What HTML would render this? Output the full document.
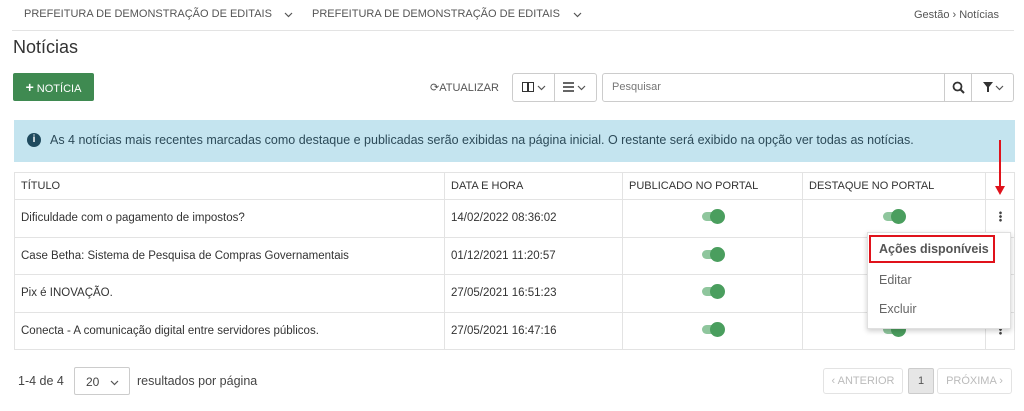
<!DOCTYPE html>
<html><head><meta charset="utf-8"><style>
*{box-sizing:border-box;margin:0;padding:0}
body{width:1024px;height:411px;background:#fff;font-family:"Liberation Sans",Arial,sans-serif;color:#333;position:relative;overflow:hidden;font-size:12px}
.a{position:absolute}
.nav{top:8px;font-size:11px;color:#555}
.sep{top:30px;left:12px;width:1002px;height:1px;background:#e3e3e3}
.btn{border:1px solid #ccc;border-radius:3px;background:#fff}
table{position:absolute;left:14px;top:172px;width:1001px;border-collapse:collapse;font-size:11.5px}
td,th{border:1px solid #e3e3e3;padding:0 6px;text-align:left;height:37.5px}
th{height:27px;font-weight:normal;font-size:11px;color:#333}
.tg{display:inline-block;position:relative;width:22px;height:9px;background:#8fc69d;border-radius:5px}
.tg:after{content:"";position:absolute;right:-1px;top:-3px;width:15px;height:15px;border-radius:50%;background:#4a9e5e}
.c{text-align:center}
.dots{display:inline-block;width:3px;height:11px;background:radial-gradient(circle,#444 1.2px,transparent 1.5px) 0 0/3px 3.7px}
.chev{position:absolute;width:9px;height:6px}
</style></head><body>
<svg width="0" height="0" style="position:absolute"><defs><path id="cv" d="M1 1l3.5 3.5L8 1" fill="none" stroke="#555" stroke-width="1.2"/></defs></svg>
<div class="a nav" style="left:24px">PREFEITURA DE DEMONSTRAÇÃO DE EDITAIS</div>
<svg class="chev" style="left:284px;top:12px"><use href="#cv"/></svg>
<div class="a nav" style="left:312px">PREFEITURA DE DEMONSTRAÇÃO DE EDITAIS</div>
<svg class="chev" style="left:573px;top:12px"><use href="#cv"/></svg>
<div class="a nav" style="left:914px;font-size:11px;top:9px">Gestão › Notícias</div>
<div class="a sep"></div>
<div class="a" style="left:13px;top:37px;font-size:18px;color:#333">Notícias</div>
<div class="a" style="left:13px;top:73px;width:81px;height:28px;background:#3f8a51;border-radius:2px;color:#fff;font-size:11px;line-height:28px;text-align:center"><b style="font-size:14px">+</b> NOTÍCIA</div>
<div class="a" style="left:430px;top:81px;font-size:11px;color:#555">⟳ATUALIZAR</div>
<div class="a btn" style="left:512px;top:73px;width:85px;height:29px"></div>
<div class="a" style="left:554px;top:73px;width:1px;height:29px;background:#ccc"></div>
<div class="a" style="left:522px;top:82px;width:12px;height:10px;border:1.5px solid #333"></div>
<div class="a" style="left:527px;top:82px;width:1.5px;height:10px;background:#333"></div>
<svg class="chev" style="left:537px;top:85px"><use href="#cv"/></svg>
<svg class="a" style="left:563px;top:82px" width="12" height="10"><path d="M0 1h11M0 5h11M0 9h11" stroke="#333" stroke-width="1.6"/></svg>
<svg class="chev" style="left:577px;top:85px"><use href="#cv"/></svg>
<div class="a btn" style="left:602px;top:73px;width:412px;height:29px"></div>
<div class="a" style="left:612px;top:81px;font-size:11px;color:#777">Pesquisar</div>
<div class="a" style="left:944px;top:73px;width:1px;height:29px;background:#ccc"></div>
<div class="a" style="left:971px;top:73px;width:1px;height:29px;background:#ccc"></div>
<svg class="a" style="left:952px;top:81px" width="13" height="13"><circle cx="5.5" cy="5.5" r="4" fill="none" stroke="#333" stroke-width="1.8"/><path d="M8.5 8.5l3.5 3.5" stroke="#333" stroke-width="2"/></svg>
<svg class="a" style="left:983px;top:82px" width="10" height="10"><path d="M0 0h10L6 5v5H4V5z" fill="#333"/></svg>
<svg class="chev" style="left:995px;top:85px"><use href="#cv"/></svg>
<div class="a" style="left:14px;top:120px;width:1001px;height:42px;background:#c4e4ef"></div>
<div class="a" style="left:27px;top:133px;width:14px;height:14px;border-radius:50%;background:#1f4a5e;color:#fff;font-size:10px;font-weight:bold;text-align:center;line-height:14px">i</div>
<div class="a" style="left:50px;top:133px;font-size:12.5px;color:#2c4a58">As 4 notícias mais recentes marcadas como destaque e publicadas serão exibidas na página inicial. O restante será exibido na opção ver todas as notícias.</div>
<table>
<tr><th style="width:430px">TÍTULO</th><th style="width:178px">DATA E HORA</th><th style="width:180px">PUBLICADO NO PORTAL</th><th style="width:183px">DESTAQUE NO PORTAL</th><th></th></tr>
<tr><td>Dificuldade com o pagamento de impostos?</td><td>14/02/2022 08:36:02</td><td class="c"><span class="tg"></span></td><td class="c"><span class="tg"></span></td><td class="c"><span class="dots"></span></td></tr>
<tr><td>Case Betha: Sistema de Pesquisa de Compras Governamentais</td><td>01/12/2021 11:20:57</td><td class="c"><span class="tg"></span></td><td class="c"><span class="tg"></span></td><td class="c"><span class="dots"></span></td></tr>
<tr><td>Pix é INOVAÇÃO.</td><td>27/05/2021 16:51:23</td><td class="c"><span class="tg"></span></td><td class="c"><span class="tg"></span></td><td class="c"><span class="dots"></span></td></tr>
<tr><td>Conecta - A comunicação digital entre servidores públicos.</td><td>27/05/2021 16:47:16</td><td class="c"><span class="tg"></span></td><td class="c"><span class="tg"></span></td><td class="c"><span class="dots"></span></td></tr>
</table>
<div class="a" style="left:867px;top:232px;width:144px;height:97px;background:#fff;border:1px solid #e0e0e0;box-shadow:0 2px 5px rgba(0,0,0,.2)"></div>
<div class="a" style="left:869px;top:235px;width:126px;height:28px;border:2px solid #e0121b"></div>
<div class="a" style="left:879px;top:242px;font-size:12.5px;color:#555;font-weight:bold">Ações disponíveis</div>
<div class="a" style="left:879px;top:273px;font-size:12.5px;color:#666">Editar</div>
<div class="a" style="left:879px;top:302px;font-size:12.5px;color:#666">Excluir</div>
<div class="a" style="left:999px;top:140px;width:2px;height:48px;background:#e0121b"></div>
<svg class="a" style="left:995px;top:186px" width="10" height="10"><path d="M0 0h10L5 9z" fill="#e0121b"/></svg>
<div class="a" style="left:18px;top:374px;font-size:12.5px;color:#444">1-4 de 4</div>
<div class="a btn" style="left:74px;top:367px;width:56px;height:28px;border-radius:2px"></div>
<div class="a" style="left:86px;top:375px;font-size:12px;color:#444">20</div>
<svg class="chev" style="left:110px;top:380px"><use href="#cv"/></svg>
<div class="a" style="left:137px;top:374px;font-size:12.5px;color:#444">resultados por página</div>
<div class="a btn" style="left:823px;top:368px;width:80px;height:26px;border-color:#e3e3e3;color:#bbb;font-size:11px;line-height:25px;text-align:center">‹ ANTERIOR</div>
<div class="a" style="left:908px;top:368px;width:26px;height:26px;background:#e6e6e6;border:1px solid #ccc;border-radius:2px;font-size:11px;line-height:25px;text-align:center;color:#555">1</div>
<div class="a btn" style="left:937px;top:368px;width:75px;height:26px;border-color:#e3e3e3;color:#bbb;font-size:11px;line-height:25px;text-align:center">PRÓXIMA ›</div>
</body></html>
